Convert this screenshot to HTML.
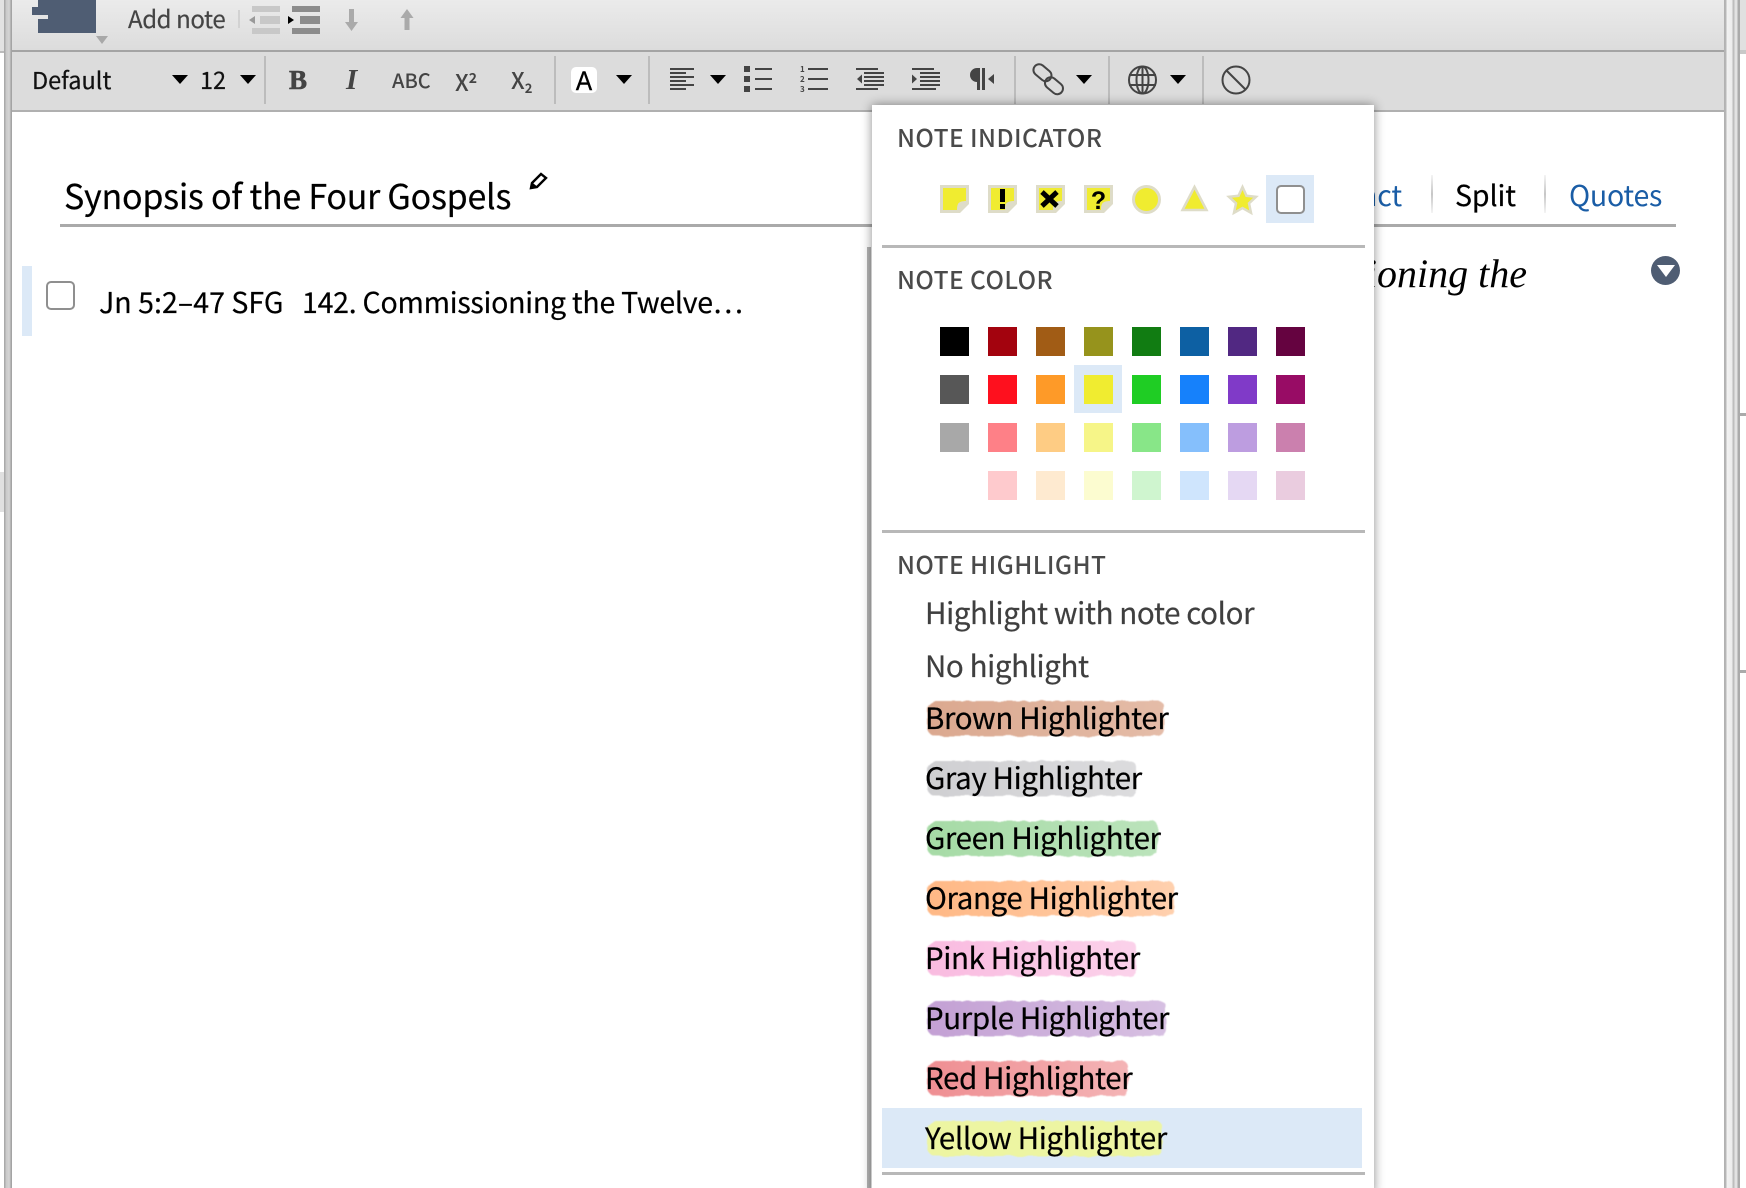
<!DOCTYPE html>
<html lang="en"><head><meta charset="utf-8"><title>Notes</title>
<style>
html,body{margin:0;padding:0;background:#fff}
#p{position:relative;width:1746px;height:1188px;overflow:hidden;background:#fff;font-family:"Noto Sans CJK SC","Liberation Sans",sans-serif;color:#000}
.a{position:absolute}
.t{position:absolute;white-space:nowrap;line-height:40px;height:40px}
.sep{position:absolute;top:56px;width:2px;height:48px;background:#bcbcbc}
.tri{position:absolute;width:0;height:0;border-left:8px solid transparent;border-right:8px solid transparent;border-top:9px solid #000;top:75px}
.sw{position:absolute;width:29px;height:29px}
.h{position:absolute;color:#4a4a4a;font-size:24.5px;letter-spacing:.42px;font-weight:500}
.i{position:absolute;color:#000;font-size:29.5px;letter-spacing:-.4px;line-height:40px;height:40px;white-space:nowrap;left:925px;-webkit-text-stroke:.2px currentColor}
.b{position:absolute;height:35px;border-radius:8px 6px 7px 9px;filter:url(#r)}
svg{position:absolute;overflow:visible}
</style></head><body><div id="p">

<svg width="0" height="0" style="left:0;top:0"><filter id="r" x="-5%" y="-20%" width="110%" height="140%"><feTurbulence type="fractalNoise" baseFrequency=".09" numOctaves="2" seed="4"/><feDisplacementMap in="SourceGraphic" scale="4"/><feGaussianBlur stdDeviation=".5"/></filter></svg>

<!-- side bands -->
<div class="a" style="left:0;top:0;width:4px;height:51px;background:#e2e2e2"></div>
<div class="a" style="left:0;top:51px;width:4px;height:2px;background:#bbb"></div>
<div class="a" style="left:0;top:472px;width:4px;height:40px;background:#e0e0e0"></div>
<div class="a" style="left:4px;top:0;width:8px;height:1188px;background:linear-gradient(90deg,#aaa 0,#aaa 1px,#c9c9c9 2px,#d4d4d4 5px,#c9c9c9 6px,#a4a4a4 7px)"></div>
<div class="a" style="left:1724px;top:0;width:16px;height:1188px;background:linear-gradient(90deg,#b0b0b0 0,#b8b8b8 2px,#f2f2f2 3px,#ececec 8px,#bdbdbd 9px,#bdbdbd 10px,#e2e2e2 11px,#e2e2e2 13px,#aaa 14px,#aaa 16px)"></div>
<div class="a" style="left:1740px;top:0;width:6px;height:50px;background:#e0e0e0"></div>
<div class="a" style="left:1740px;top:50px;width:6px;height:4px;background:#c8c8c8"></div>
<div class="a" style="left:1740px;top:413px;width:6px;height:3px;background:#aaa"></div>
<div class="a" style="left:1740px;top:670px;width:6px;height:3px;background:#aaa"></div>

<!-- toolbar 1 -->
<div class="a" style="left:12px;top:0;width:1712px;height:50px;background:linear-gradient(#ebebeb,#dcdcdc)"></div>
<div class="a" style="left:12px;top:50px;width:1712px;height:2px;background:#a4a4a4"></div>
<div class="a" style="left:12px;top:52px;width:1712px;height:58px;background:#dcdcdc"></div>
<div class="a" style="left:12px;top:110px;width:1712px;height:2px;background:#b0b0b0"></div>

<div class="a" style="left:38px;top:0;width:58px;height:33px;background:#4f5d73"></div>
<div class="a" style="left:32px;top:7px;width:16px;height:8px;background:#4f5d73"></div>
<div class="a" style="left:38px;top:15px;width:10px;height:4px;background:#e4e4e4"></div>
<div class="a" style="left:96px;top:36px;width:0;height:0;border-left:6px solid transparent;border-right:6px solid transparent;border-top:8px solid #a8a8a8"></div>
<div class="t" style="left:128px;top:-2px;font-size:24px;letter-spacing:-.4px;color:#444;-webkit-text-stroke:.2px #444">Add note</div>
<div class="a" style="left:238px;top:10px;width:2px;height:18px;background:#d2d2d2"></div>
<svg style="left:0;top:0" width="460" height="50">
 <g fill="#c8c8c8"><rect x="252" y="6" width="28" height="6"/><rect x="260" y="16" width="20" height="8"/><rect x="252" y="28" width="28" height="6"/></g>
 <path d="M255 16v8l-6-4z" fill="#999"/>
 <g fill="#8c8c8c"><rect x="292" y="6" width="28" height="6"/><rect x="300" y="16" width="20" height="8"/><rect x="292" y="28" width="28" height="6"/></g>
 <path d="M288 16v8l6-4z" fill="#000"/>
 <path d="M349 9h5v13h4l-6.500 9-6.500-9h4z" fill="#aaa"/>
 <path d="M404.500 30h5V18h4l-6.500-9-6.500 9h4z" fill="#aaa"/>
</svg>

<!-- toolbar 2 -->
<div class="t" style="left:32px;top:59px;font-size:23.5px;color:#111;-webkit-text-stroke:.2px #111">Default</div>
<div class="tri" style="left:172px"></div>
<div class="t" style="left:200px;top:59px;font-size:23.5px;color:#111;-webkit-text-stroke:.2px #111">12</div>
<div class="tri" style="left:240px"></div>
<div class="sep" style="left:264px"></div>
<div class="t" style="left:289px;top:60px;font:bold 27px/40px 'Liberation Serif',serif;color:#444;-webkit-text-stroke:.6px #444">B</div>
<div class="t" style="left:346px;top:60px;font:italic bold 29px/40px 'Liberation Serif',serif;color:#444">I</div>
<div class="t" style="left:392px;top:60px;font-size:20px;color:#444;font-weight:500">ABC</div>
<div class="t" style="left:455px;top:61px;font-size:23px;color:#444;font-weight:500">X<sup style="font-size:14px;line-height:0;vertical-align:8px;font-weight:700">2</sup></div>
<div class="t" style="left:511px;top:59px;font-size:23px;color:#444;font-weight:500">X<sub style="font-size:13px;line-height:0;vertical-align:-4px;font-weight:700">2</sub></div>
<div class="sep" style="left:554px"></div>
<div class="a" style="left:571px;top:67px;width:26px;height:26px;background:#fff;border-radius:5px"></div>
<div class="t" style="left:572px;top:61px;width:24px;text-align:center;font-size:27px;color:#000;font-family:'Liberation Sans',sans-serif;transform:scaleX(.9);-webkit-text-stroke:.4px #000">A</div>
<div class="tri" style="left:616px"></div>
<div class="sep" style="left:648px"></div>
<div class="tri" style="left:710px"></div>
<svg style="left:0;top:0" width="1300" height="112">
 <g fill="#444">
  <rect x="670" y="68" width="24" height="2"/><rect x="670" y="72" width="16" height="2"/><rect x="670" y="76" width="24" height="2"/><rect x="670" y="80" width="16" height="2"/><rect x="670" y="84" width="24" height="2"/><rect x="670" y="88" width="16" height="2"/>
  <rect x="744" y="66" width="6" height="6"/><rect x="744" y="76" width="6" height="6"/><rect x="744" y="86" width="6" height="6"/>
  <rect x="755" y="68" width="17" height="2"/><rect x="755" y="78" width="17" height="2"/><rect x="755" y="88" width="17" height="2"/>
  <rect x="808" y="68" width="20" height="2"/><rect x="808" y="78" width="20" height="2"/><rect x="808" y="88" width="20" height="2"/>
  <rect x="856" y="68" width="22" height="2"/><rect x="864" y="72" width="20" height="2"/><rect x="864" y="76" width="20" height="2"/><rect x="864" y="80" width="20" height="2"/><rect x="864" y="84" width="20" height="2"/><rect x="856" y="88" width="22" height="2"/>
  <path d="M862 74.500v9l-5-4.500z"/>
  <rect x="912" y="68" width="22" height="2"/><rect x="920" y="72" width="20" height="2"/><rect x="920" y="76" width="20" height="2"/><rect x="920" y="80" width="20" height="2"/><rect x="920" y="84" width="20" height="2"/><rect x="912" y="88" width="24" height="2"/>
  <path d="M912 74.500v9l5-4.500z"/>
  <path d="M977 68h3v22h-3V82a7 7 0 0 1 0-14z"/>
  <rect x="982" y="68" width="3" height="22"/>
  <path d="M994 74v10l-6-5z"/>
 </g>
 <g font-family="Noto Sans CJK SC,Liberation Sans,sans-serif" font-size="8" font-weight="700" fill="#444">
  <text x="800" y="72">1</text><text x="800" y="82">2</text><text x="800" y="92">3</text>
 </g>
 <g fill="none" stroke="#444" stroke-width="2">
  <rect x="1032.500" y="67" width="20" height="11.500" rx="5.700" transform="rotate(40 1042.500 72.700)"/>
  <rect x="1044" y="80" width="20" height="11.500" rx="5.700" transform="rotate(40 1054 85.700)"/>
  <circle cx="1142.500" cy="80" r="13.500"/><ellipse cx="1142.500" cy="80" rx="6" ry="13.500"/><path d="M1129 75h27M1129 85h27M1142.500 66.500v27"/>
  <circle cx="1236" cy="80" r="13.500"/><path d="M1226.500 70.500l19 19"/>
 </g>
</svg>
<div class="sep" style="left:1014px"></div>
<div class="tri" style="left:1076px"></div>
<div class="sep" style="left:1108px"></div>
<div class="tri" style="left:1170px"></div>
<div class="sep" style="left:1202px"></div>

<!-- content -->
<div class="t" style="left:64px;top:175px;font-size:34px;letter-spacing:-.25px;color:#000;-webkit-text-stroke:.2px #000">Synopsis of the Four Gospels</div>
<svg style="left:0;top:0" width="600" height="210"><path d="M531 188l1-5 9-9 5 4-9 9z" fill="#fff" stroke="#000" stroke-width="2.400"/><path d="M531 188l1-5 5 4z" fill="#000" stroke="#000"/></svg>
<div class="a" style="left:60px;top:224px;width:1616px;height:3px;background:#aaa"></div>
<div class="t" style="left:1200px;top:175px;font-size:28.5px;letter-spacing:-.1px;color:#1a5da6;width:202px;text-align:right">Compact</div>
<div class="a" style="left:1431px;top:175px;width:2px;height:38px;background:linear-gradient(#f4f4f4,#c6c6c6 50%,#f4f4f4)"></div>
<div class="t" style="left:1455px;top:175px;font-size:28.5px;letter-spacing:-.1px;color:#000;-webkit-text-stroke:.2px #000">Split</div>
<div class="a" style="left:1544px;top:175px;width:2px;height:38px;background:linear-gradient(#f4f4f4,#c6c6c6 50%,#f4f4f4)"></div>
<div class="t" style="left:1569px;top:175px;font-size:28.5px;letter-spacing:-.25px;color:#1a5da6">Quotes</div>

<div class="a" style="left:22px;top:266px;width:10px;height:70px;background:#dce9f7"></div>
<div class="a" style="left:46px;top:281px;width:25px;height:25px;border:2px solid #8f8f8f;border-radius:5px;background:#fff"></div>
<div class="t" style="left:99px;top:282px;font-size:28.5px;letter-spacing:.05px;color:#000;white-space:pre;-webkit-text-stroke:.2px #000">Jn 5:2–47 SFG</div>
<div class="t" style="left:302px;top:282px;font-size:28.5px;letter-spacing:-.25px;color:#000;white-space:pre;-webkit-text-stroke:.2px #000">142. Commissioning the Twelve…</div>
<div class="t" style="left:1000px;top:254px;width:527px;text-align:right;font:italic 40px/40px 'Liberation Serif',serif;color:#000">Commissioning the</div>
<div class="a" style="left:1651px;top:256px;width:29px;height:29px;border-radius:50%;background:#4f5d73"></div>
<div class="a" style="left:1657px;top:265px;width:0;height:0;border-left:9px solid transparent;border-right:9px solid transparent;border-top:12px solid #fff"></div>

<div class="a" style="left:867px;top:247px;width:4px;height:941px;background:#b4b4b4"></div>

<!-- popup -->
<div class="a" style="left:872px;top:105px;width:502px;height:1090px;background:#fff;box-shadow:0 0 10px rgba(0,0,0,.45)"></div>

<div class="h" style="left:897px;top:118px;line-height:40px">NOTE INDICATOR</div>
<svg style="left:0;top:0" width="1400" height="240">
 <defs>
  <g id="n">
   <path d="M940 185h29v19l-9 9h-20z" fill="#dedcc8"/>
   <path d="M943 188h23v13c-4 0-7 1-8 3s-1 4-1 6h-14z" fill="#f0ec30"/>
  </g>
 </defs>
 <use href="#n"/>
 <use href="#n" x="48"/>
 <use href="#n" x="96"/>
 <use href="#n" x="144"/>
 <rect x="1000" y="189" width="5" height="13" fill="#000"/><rect x="1000" y="204" width="5" height="5" fill="#000"/>
 <path d="M1042 192l15 14M1057 192l-15 14" stroke="#000" stroke-width="5" fill="none"/>
 <text x="1098.500" y="209" text-anchor="middle" font-family="Liberation Sans,sans-serif" font-weight="700" font-size="25" fill="#000">?</text>
 <circle cx="1146.500" cy="199.500" r="13" fill="#f0ec30" stroke="#dedcc8" stroke-width="3"/>
 <path d="M1194.500 187l12 23h-24z" fill="#f0ec30" stroke="#dedcc8" stroke-width="2.500"/>
 <path d="M1242.500 187l4 8.800 9.500 1-7 6.500 2 9.500-8.500-4.800-8.500 4.800 2-9.500-7-6.500 9.500-1z" fill="#f0ec30" stroke="#dedcc8" stroke-width="2.500"/>
</svg>
<div class="a" style="left:1266px;top:175px;width:48px;height:48px;background:#dce9f7"></div>
<div class="a" style="left:1276px;top:185px;width:25px;height:25px;border:2px solid #8f8f8f;border-radius:5px;background:#fff"></div>

<div class="a" style="left:882px;top:245px;width:483px;height:3px;background:#b8b8b8"></div>
<div class="h" style="left:897px;top:260px;line-height:40px">NOTE COLOR</div>

<div class="a" style="left:1074px;top:365px;width:48px;height:48px;background:#dce9f7"></div>
<div class="sw" style="left:940px;top:327px;background:#000"></div>
<div class="sw" style="left:988px;top:327px;background:#a3030e"></div>
<div class="sw" style="left:1036px;top:327px;background:#a15c15"></div>
<div class="sw" style="left:1084px;top:327px;background:#96931c"></div>
<div class="sw" style="left:1132px;top:327px;background:#117c12"></div>
<div class="sw" style="left:1180px;top:327px;background:#0d60a3"></div>
<div class="sw" style="left:1228px;top:327px;background:#512882"></div>
<div class="sw" style="left:1276px;top:327px;background:#650340"></div>
<div class="sw" style="left:940px;top:375px;background:#575757"></div>
<div class="sw" style="left:988px;top:375px;background:#fe101e"></div>
<div class="sw" style="left:1036px;top:375px;background:#fe9a28"></div>
<div class="sw" style="left:1084px;top:375px;background:#f0ec30"></div>
<div class="sw" style="left:1132px;top:375px;background:#1fcd24"></div>
<div class="sw" style="left:1180px;top:375px;background:#1681fb"></div>
<div class="sw" style="left:1228px;top:375px;background:#803ac8"></div>
<div class="sw" style="left:1276px;top:375px;background:#980c65"></div>
<div class="sw" style="left:940px;top:423px;background:#a8a8a8"></div>
<div class="sw" style="left:988px;top:423px;background:#fe8087"></div>
<div class="sw" style="left:1036px;top:423px;background:#fecc84"></div>
<div class="sw" style="left:1084px;top:423px;background:#f6f588"></div>
<div class="sw" style="left:1132px;top:423px;background:#88e688"></div>
<div class="sw" style="left:1180px;top:423px;background:#85bffc"></div>
<div class="sw" style="left:1228px;top:423px;background:#bd9de0"></div>
<div class="sw" style="left:1276px;top:423px;background:#cb80ae"></div>
<div class="sw" style="left:988px;top:471px;background:#fecacd"></div>
<div class="sw" style="left:1036px;top:471px;background:#feead0"></div>
<div class="sw" style="left:1084px;top:471px;background:#fcfcd0"></div>
<div class="sw" style="left:1132px;top:471px;background:#cff5cf"></div>
<div class="sw" style="left:1180px;top:471px;background:#cfe5fd"></div>
<div class="sw" style="left:1228px;top:471px;background:#e5d8f3"></div>
<div class="sw" style="left:1276px;top:471px;background:#eaccdf"></div>

<div class="a" style="left:882px;top:530px;width:483px;height:3px;background:#b8b8b8"></div>
<div class="h" style="left:897px;top:545px;line-height:40px">NOTE HIGHLIGHT</div>

<div class="a" style="left:882px;top:1108px;width:480px;height:60px;background:#dce9f7"></div>
<div class="a" style="left:882px;top:1172px;width:483px;height:3px;background:#b8b8b8"></div>

<div class="b" style="left:927px;top:701px;width:237px;background:linear-gradient(90deg,#dba88f,#e4bca8)"></div>
<div class="b" style="left:927px;top:761px;width:209px;background:linear-gradient(90deg,#cfcfd2,#dcdcde)"></div>
<div class="b" style="left:927px;top:821px;width:231px;background:linear-gradient(90deg,#a6dba6,#bbe3bb)"></div>
<div class="b" style="left:927px;top:881px;width:247px;background:linear-gradient(90deg,#ffb885,#ffd0ae)"></div>
<div class="b" style="left:927px;top:941px;width:209px;background:linear-gradient(90deg,#f9bbe0,#fbd2ea)"></div>
<div class="b" style="left:927px;top:1001px;width:239px;background:linear-gradient(90deg,#c3a0d4,#d7c0e2)"></div>
<div class="b" style="left:927px;top:1061px;width:201px;background:linear-gradient(90deg,#ef8e92,#f4b4b6)"></div>
<div class="b" style="left:927px;top:1121px;width:235px;background:#edf5a2"></div>

<div class="i" style="top:592px;color:#3f3f3f">Highlight with note color</div>
<div class="i" style="top:645px;color:#3f3f3f">No highlight</div>
<div class="i" style="top:697px">Brown Highlighter</div>
<div class="i" style="top:757px">Gray Highlighter</div>
<div class="i" style="top:817px">Green Highlighter</div>
<div class="i" style="top:877px">Orange Highlighter</div>
<div class="i" style="top:937px">Pink Highlighter</div>
<div class="i" style="top:997px">Purple Highlighter</div>
<div class="i" style="top:1057px">Red Highlighter</div>
<div class="i" style="top:1117px">Yellow Highlighter</div>
</div></body></html>
